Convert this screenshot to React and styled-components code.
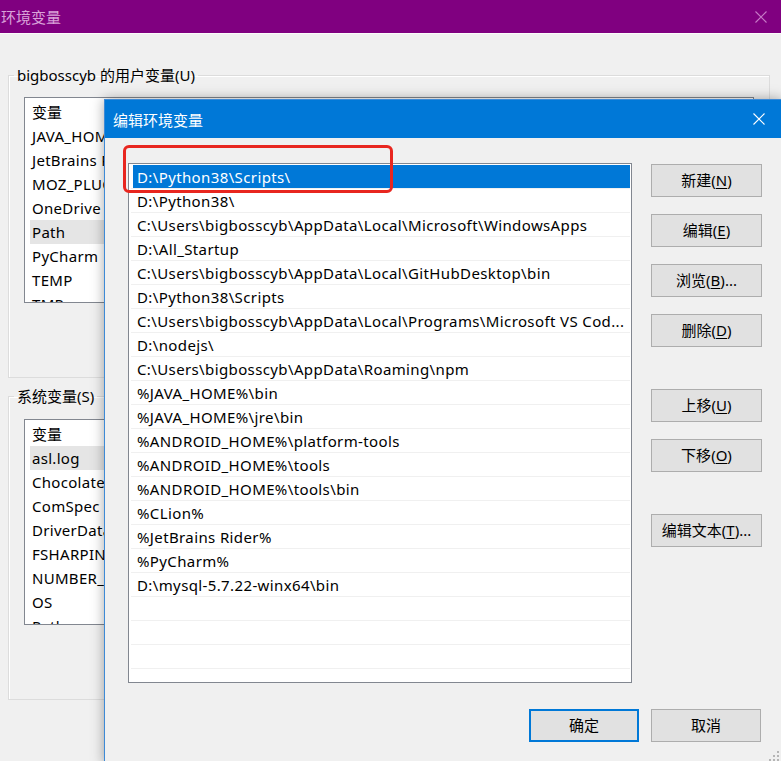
import React from "react";
import styled, { createGlobalStyle } from "styled-components";

const GlobalStyle = createGlobalStyle`
  html, body {
    margin: 0;
    padding: 0;
    background: #f0f0f0;
  }
  body {
    font-family: "Noto Sans", "Noto Sans CJK SC", sans-serif;
    font-size: 15px;
    color: #000;
  }
  * { box-sizing: border-box; }
`;

const Screen = styled.div`
  position: relative;
  width: 781px;
  height: 761px;
  overflow: hidden;
  background: #f0f0f0;
`;

/* ---------- background window: 环境变量 ---------- */

const WinTitle = styled.div`
  height: 34px;
  background: #800080;
  border-bottom: 1px solid #fbfbfb;
  color: #d9a2d9;
  display: flex;
  align-items: center;
  justify-content: space-between;
  padding: 0 14px 0 1px;
  font-size: 15px;
`;

const WinBody = styled.div`
  padding: 31px 11px 0 8px;
  display: flex;
  flex-direction: column;
  gap: 8px;
`;

const GroupBox = styled.fieldset`
  margin: 0;
  padding: 0;
  min-width: 0;
  border: 1px solid #dcdcdc;
  box-shadow: inset 1px 1px 0 #fff;
`;

const GroupLabel = styled.legend`
  margin-left: 5px;
  padding: 0 3px;
  line-height: 20px;
  font-size: 15px;
`;

const GroupInner = styled.div`
  padding: ${(p) => p.$top || 12}px 15px 27px 15px;
`;

const VarList = styled.div`
  height: 206px;
  border: 1px solid #828790;
  background: #fff;
  overflow: hidden;
`;

const VarHeader = styled.div`
  height: 26px;
  display: flex;
  align-items: center;
  padding-left: 7px;
  span {
    width: 190px;
    border-right: 1px solid #e5e5e5;
  }
`;

const VarRow = styled.div`
  height: 24px;
  display: flex;
  align-items: center;
  padding-left: 7px;
  white-space: nowrap;
  letter-spacing: 0.3px;
  background: ${(p) =>
    p.$selected ? "linear-gradient(to right, transparent 5px, #e5e5e5 5px)" : "transparent"};
`;

const GroupButtons = styled.div`
  display: flex;
  justify-content: flex-end;
  gap: 10px;
  margin-top: 14px;
`;

/* ---------- foreground dialog: 编辑环境变量 ---------- */

const Dialog = styled.div`
  position: absolute;
  left: 104px;
  top: 99px;
  width: 678px;
  height: 665px;
  border: 1px solid #3d8ad6;
  background: #f0f0f0;
  box-shadow: 0 0 12px rgba(0, 0, 0, 0.35);
`;

const DialogTitle = styled.div`
  height: 38px;
  background: #0078d7;
  color: #fff;
  display: flex;
  align-items: center;
  justify-content: space-between;
  padding: 0 16px 0 8px;
  font-size: 15px;
`;

const DialogBody = styled.div`
  display: grid;
  grid-template-columns: 504px 111px;
  column-gap: 19px;
  row-gap: 26px;
  padding: 25px 19px 0 23px;
`;

const PathList = styled.div`
  height: 520px;
  border: 1px solid #828790;
  background: #fff;
  padding: 1px 1px 0 2px;
  overflow: hidden;
`;

const PathRow = styled.div`
  height: 24px;
  display: flex;
  align-items: center;
  padding-left: 6px;
  border-bottom: 1px solid #f0f0f0;
  white-space: nowrap;
  overflow: hidden;
  letter-spacing: 0.38px;
  color: ${(p) => (p.$selected ? "#fff" : "#000")};
  background: ${(p) =>
    p.$selected ? "linear-gradient(to right, transparent 2px, #0078d7 2px)" : "transparent"};
`;

const ButtonColumn = styled.div`
  display: flex;
  flex-direction: column;
`;

const WinButton = styled.button`
  width: ${(p) => p.$width || 111}px;
  height: 33px;
  margin-top: ${(p) => p.$space || 0}px;
  background: #e1e1e1;
  border: ${(p) => (p.$default ? "2px solid #0078d7" : "1px solid #adadad")};
  font-family: inherit;
  font-size: 15px;
  color: #000;
  padding: 0 0 3px 0;
  display: flex;
  align-items: center;
  justify-content: center;
  white-space: pre;
  u {
    text-decoration-thickness: 1px;
    text-underline-offset: 2px;
  }
`;

const Footer = styled.div`
  grid-column: 1 / -1;
  display: flex;
  justify-content: flex-end;
  gap: 12px;
  padding-right: 1px;
`;

const Annotation = styled.div`
  position: absolute;
  left: 18px;
  top: 45px;
  width: 270px;
  height: 48px;
  border: 3px solid #e8261f;
  border-radius: 6px;
  pointer-events: none;
`;

const Grip = styled.svg`
  position: absolute;
  right: 2px;
  bottom: 2px;
`;

function CloseX({ color }) {
  return (
    <svg width="12" height="12" viewBox="0 0 12 12">
      <path d="M0.5 0.5 L11.5 11.5 M11.5 0.5 L0.5 11.5" stroke={color} strokeWidth="1.1" fill="none" />
    </svg>
  );
}

const userVars = ["JAVA_HOME", "JetBrains Rider", "MOZ_PLUGIN_PATH", "OneDrive", "Path", "PyCharm", "TEMP", "TMP"];
const systemVars = ["asl.log", "ChocolateyInstall", "ComSpec", "DriverData", "FSHARPINSTALLDIR", "NUMBER_OF_PROCESSORS", "OS", "Path"];

const paths = [
  "D:\\Python38\\Scripts\\",
  "D:\\Python38\\",
  "C:\\Users\\bigbosscyb\\AppData\\Local\\Microsoft\\WindowsApps",
  "D:\\All_Startup",
  "C:\\Users\\bigbosscyb\\AppData\\Local\\GitHubDesktop\\bin",
  "D:\\Python38\\Scripts",
  "C:\\Users\\bigbosscyb\\AppData\\Local\\Programs\\Microsoft VS Cod...",
  "D:\\nodejs\\",
  "C:\\Users\\bigbosscyb\\AppData\\Roaming\\npm",
  "%JAVA_HOME%\\bin",
  "%JAVA_HOME%\\jre\\bin",
  "%ANDROID_HOME%\\platform-tools",
  "%ANDROID_HOME%\\tools",
  "%ANDROID_HOME%\\tools\\bin",
  "%CLion%",
  "%JetBrains Rider%",
  "%PyCharm%",
  "D:\\mysql-5.7.22-winx64\\bin",
  "",
  "",
  "",
  "",
];

const sideButtons = [
  { label: "新建", key: "N", space: 1 },
  { label: "编辑", key: "E", space: 17 },
  { label: "浏览", key: "B", space: 17, more: true },
  { label: "删除", key: "D", space: 17 },
  { label: "上移", key: "U", space: 42 },
  { label: "下移", key: "O", space: 17 },
  { label: "编辑文本", key: "T", space: 42, more: true },
];

function VarGroup({ title, vars, selected, top }) {
  return (
    <GroupBox>
      <GroupLabel>{title}</GroupLabel>
      <GroupInner $top={top}>
        <VarList>
          <VarHeader>
            <span>变量</span>
          </VarHeader>
          {vars.map((v) => (
            <VarRow key={v} $selected={v === selected}>
              {v}
            </VarRow>
          ))}
        </VarList>
        <GroupButtons>
          <WinButton $width={75}>新建</WinButton>
          <WinButton $width={75}>编辑</WinButton>
          <WinButton $width={75}>删除</WinButton>
        </GroupButtons>
      </GroupInner>
    </GroupBox>
  );
}

export default function App() {
  return (
    <Screen>
      <GlobalStyle />
      <WinTitle>
        <span>环境变量</span>
        <CloseX color="#c77ac7" />
      </WinTitle>
      <WinBody>
        <VarGroup title="bigbosscyb 的用户变量(U)" vars={userVars} selected="Path" top={12} />
        <VarGroup title="系统变量(S)" vars={systemVars} selected="asl.log" top={13} />
      </WinBody>

      <Dialog>
        <DialogTitle>
          <span>编辑环境变量</span>
          <CloseX color="#ffffff" />
        </DialogTitle>
        <DialogBody>
          <PathList>
            {paths.map((p, i) => (
              <PathRow key={i} $selected={i === 0}>
                {p}
              </PathRow>
            ))}
          </PathList>
          <ButtonColumn>
            {sideButtons.map((b) => (
              <WinButton key={b.label} $space={b.space}>
                <span>
                  {b.label}(<u>{b.key}</u>){b.more ? "..." : ""}
                </span>
              </WinButton>
            ))}
          </ButtonColumn>
          <Footer>
            <WinButton $width={110} $default>
              确定
            </WinButton>
            <WinButton $width={110}>取消</WinButton>
          </Footer>
        </DialogBody>
        <Annotation />
        <Grip width="10" height="10" viewBox="0 0 10 10">
          <g fill="#b5b5b5">
            <rect x="8" y="0" width="2" height="2" />
            <rect x="4" y="4" width="2" height="2" />
            <rect x="8" y="4" width="2" height="2" />
            <rect x="0" y="8" width="2" height="2" />
            <rect x="4" y="8" width="2" height="2" />
            <rect x="8" y="8" width="2" height="2" />
          </g>
        </Grip>
      </Dialog>
    </Screen>
  );
}
